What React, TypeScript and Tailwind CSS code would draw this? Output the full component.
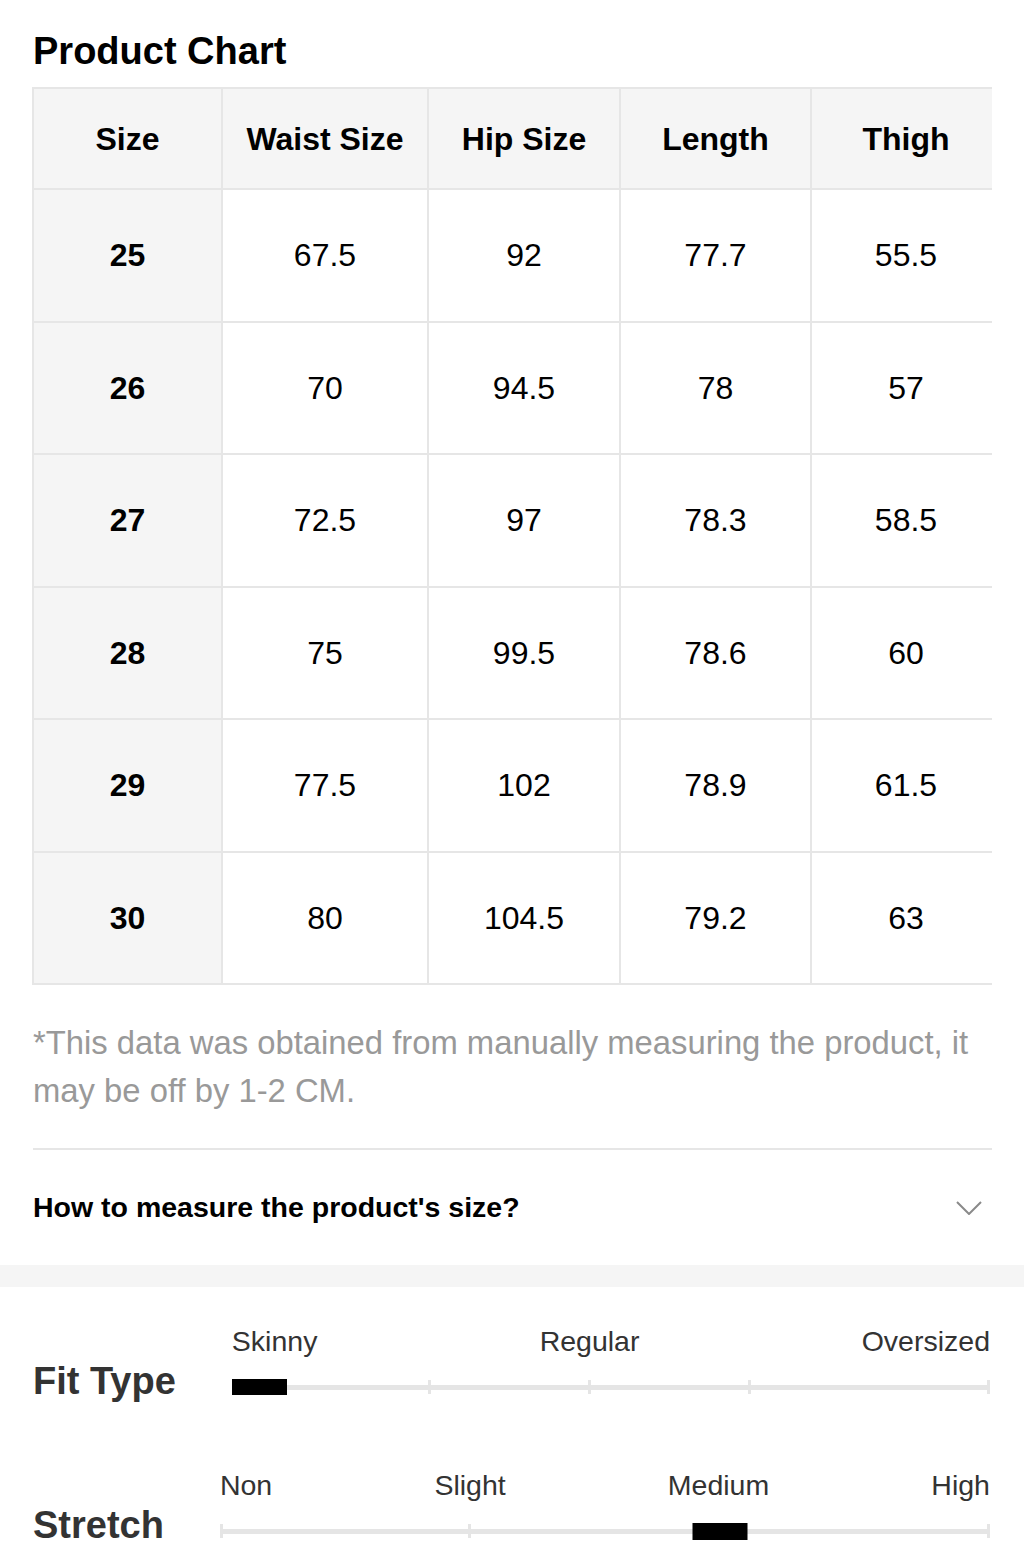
import React from 'react';

type Row = { size: string; waist: string; hip: string; length: string; thigh: string };

const rows: Row[] = [
  { size: '25', waist: '67.5', hip: '92', length: '77.7', thigh: '55.5' },
  { size: '26', waist: '70', hip: '94.5', length: '78', thigh: '57' },
  { size: '27', waist: '72.5', hip: '97', length: '78.3', thigh: '58.5' },
  { size: '28', waist: '75', hip: '99.5', length: '78.6', thigh: '60' },
  { size: '29', waist: '77.5', hip: '102', length: '78.9', thigh: '61.5' },
  { size: '30', waist: '80', hip: '104.5', length: '79.2', thigh: '63' },
];

const headers = ['Size', 'Waist Size', 'Hip Size', 'Length', 'Thigh'];

// little grey notch on the slider track
const Tick = () => <div className="h-[14px] w-[3px] shrink-0 bg-[#e5e5e5]" />;
const Seg = ({ className }: { className: string }) => <div className={`h-[5px] bg-[#e5e5e5] ${className}`} />;

export default function App() {
  return (
    <div className="w-[1024px] bg-white font-['Liberation_Sans',Arial,sans-serif] text-black">
      {/* size table */}
      <div className="pl-[33px] pr-[32px] pt-[32px]">
        <h2 className="text-[38px] font-bold leading-[38px]">Product Chart</h2>

        <div className="-ml-px mt-[17px] overflow-hidden">
          <div className="grid w-max grid-cols-[189px_206px_192px_191px_190px] border-l-2 border-t-2 border-[#e6e6e6]">
            {headers.map(h => (
              <div
                key={h}
                className="flex h-[101px] items-center justify-center border-b-2 border-r-2 border-[#e6e6e6] bg-[#f5f5f5] text-[32px] font-bold"
              >
                {h}
              </div>
            ))}
            {rows.map(r => (
              <React.Fragment key={r.size}>
                <div className="flex h-[132.5px] items-center justify-center border-b-2 border-r-2 border-[#e6e6e6] bg-[#f5f5f5] text-[32px] font-bold">
                  {r.size}
                </div>
                {[r.waist, r.hip, r.length, r.thigh].map((v, i) => (
                  <div
                    key={i}
                    className="flex h-[132.5px] items-center justify-center border-b-2 border-r-2 border-[#e6e6e6] text-[32px]"
                  >
                    {v}
                  </div>
                ))}
              </React.Fragment>
            ))}
          </div>
        </div>

        <p className="mt-[34px] text-[32.8px] leading-[48px] text-[#999999]">
          *This data was obtained from manually measuring the product, it may be off by 1-2 CM.
        </p>

        <div className="mt-[33px] h-[2px] bg-[#e6e6e6]" />

        <div className="flex h-[115px] items-center justify-between">
          <span className="text-[28.5px] font-bold">How to measure the product's size?</span>
          <svg width="26" height="14" viewBox="0 0 26 14" className="mr-[10px]" fill="none">
            <polyline points="1,1 13,13 25,1" stroke="#8a8a8a" strokeWidth="2" />
          </svg>
        </div>
      </div>

      <div className="h-[22px] bg-[#f5f5f5]" />

      {/* fit / stretch */}
      <div className="flex flex-col gap-[65px] pl-[33px] pr-[34px] pt-[34px] pb-[23px] text-[#333333]">
        <div className="flex items-end gap-[56px]">
          <div className="text-[38px] font-bold leading-none">Fit Type</div>
          <div className="flex-1">
            <div className="flex h-[40px] justify-between text-[28.5px] leading-[40px]">
              <span>Skinny</span>
              <span>Regular</span>
              <span>Oversized</span>
            </div>
            <div className="relative mb-[5px] mt-[18px] flex h-[16px] items-center">
              <Seg className="flex-[197]" />
              <Tick />
              <Seg className="flex-[158]" />
              <Tick />
              <Seg className="flex-[158]" />
              <Tick />
              <Seg className="flex-[237]" />
              <Tick />
              <div className="absolute left-0 top-0 h-[16px] w-[55px] bg-black" />
            </div>
          </div>
        </div>

        <div className="flex items-end gap-[56px]">
          <div className="text-[38px] font-bold leading-none">Stretch</div>
          <div className="flex-1">
            <div className="flex h-[40px] justify-between text-[28.5px] leading-[40px]">
              <span>Non</span>
              <span>Slight</span>
              <span>Medium</span>
              <span>High</span>
            </div>
            <div className="relative mb-[5px] mt-[18px] flex h-[16px] items-center">
              <Tick />
              <Seg className="h-[4px] flex-[245]" />
              <Tick />
              <Seg className="h-[4px] flex-[516]" />
              <Tick />
              <div className="absolute left-[64.9%] top-0 h-[17px] w-[55px] -translate-x-1/2 bg-black" />
            </div>
          </div>
        </div>
      </div>
    </div>
  );
}
